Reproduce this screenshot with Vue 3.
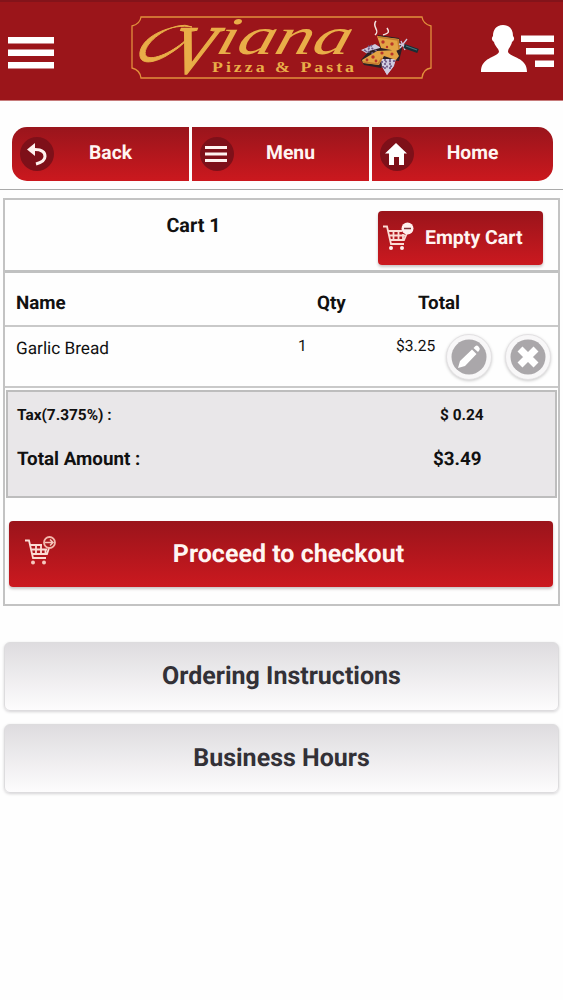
<template>
    <div class="page">
        <header class="top-bar">
            <button type="button" class="plain-btn" title="Open menu">
                <svg class="burger" width="46" height="32" viewBox="0 0 46 32">
                    <path d="M0 0h46v6.500H0zM0 12.500h46v6.500H0zM0 25h46v6.500H0z" fill="#fff" />
                </svg>
            </button>

            <svg class="logo" width="304" height="66" viewBox="0 0 304 66">
                <path class="logo-frame"
                    d="M11 2H292q1 7 9 9V53q-8 1-9 10H11q-1-8-9-10V11q8-2 9-9z" />
                <!-- flourish that sweeps in front of the name -->
                <path class="logo-swash"
                    d="M62 12C44 8 13 20 10 37C8 51 24 48 36 41C46 35 53 30 58 23C45 36 22 47 16 41C11 33 29 15 48 11Q55 9 62 12z" />
                <text class="logo-script logo-cap" transform="translate(38 58) skewX(-12)" font-size="68"
                    textLength="41" lengthAdjust="spacingAndGlyphs">V</text>
                <text class="logo-script" transform="translate(84 39) skewX(-16)" font-size="53"
                    textLength="134" lengthAdjust="spacingAndGlyphs">iana</text>
                <text class="logo-sub" x="82" y="57" textLength="145" lengthAdjust="spacingAndGlyphs">Pizza &amp; Pasta</text>

                <!-- pizza slices on a checked napkin -->
                <g>
                    <path d="M245 20c6-5-4-8 1-14M253 20c7-2 6-4 4-7" fill="none" stroke="#f4e5e2"
                        stroke-width="1.500" />
                    <path d="M231 35l14-6 8 5-12 7zM250 41l17-2-3 12-7 9-6-10z" fill="#cfcbe0" />
                    <path d="M231 45l3 5 17 3 3-9 15 2 3-12-3-11-21-3 2 13-11 3z" fill="#2b2025" />
                    <path d="M251 44h15l-3 8-6 8-5-9z" fill="#cfcbe0" />
                    <path d="M234 35l13 5M238 31l12 7M242 30l-6 7M251 47l14-1M252 52l12-1M255 44v12M260 44v12"
                        stroke="#75618c" stroke-width="1.800" stroke-dasharray="2 2" />
                    <path d="M247 21l22 3 1 10-4 2-15-3zM232 45l15-9 19-1 3 6-3 4-12-4-5 9-16-2z"
                        fill="#e3a344" />
                    <path d="M233 47l15 2 4-6M248 22l20 3 1 9" fill="none" stroke="#c57b2d"
                        stroke-width="1.500" />
                    <g fill="#b83529">
                        <circle cx="253" cy="27" r="1.700" />
                        <circle cx="262" cy="29" r="1.700" />
                        <circle cx="257" cy="32" r="1.200" />
                        <circle cx="243" cy="42" r="1.700" />
                        <circle cx="252" cy="38" r="1.600" />
                        <circle cx="262" cy="39" r="1.600" />
                        <circle cx="246" cy="46" r="1.400" />
                        <circle cx="237" cy="45" r="1.400" />
                    </g>
                    <path d="M270 33l7-9M271 26l4 9M269 29l8 2" stroke="#cfc5da" stroke-width="1.300" />
                    <path d="M274 31l14 5" stroke="#172e35" stroke-width="4.500" />
                    <path d="M276 31l11 4" stroke="#4d7077" stroke-width="1.300" />
                </g>
            </svg>

            <button type="button" class="plain-btn" title="Account">
                <svg class="account" width="73" height="47" viewBox="0 0 73 47">
                    <path
                        d="M22 0c7 0 10 5 10 11 2 2 1 5-1 6-1 5-4 6-4 10 3 6 19 5 19 20H0C0 32 15 33 18 27c0-4-4-5-5-10-2-1-3-4-1-6C12 5 15 0 22 0zM40 10.500h33v6.500H40zM45 23h28v6.500H45zM54 35.500h19v6.500H54z"
                        fill="#fff" />
                </svg>
            </button>
        </header>

        <nav class="main-nav">
            <a v-for="item in navItems" :key="item.label" class="nav-item">
                <svg class="nav-icon" width="34" height="34" viewBox="0 0 34 34">
                    <circle cx="17" cy="17" r="17" fill="#7e1019" />
                    <path v-if="item.icon === 'back'" d="M11 12.500h4q10 0 10 7 0 5-9 7.500" fill="none"
                        stroke="#fff2ef" stroke-width="3" />
                    <path v-if="item.icon === 'back'" d="M7 12.500l8-6.500v13z" fill="#fff2ef" />
                    <path v-if="item.icon === 'menu'" d="M5 10.500h22M5 17h22M5 23.500h22" stroke="#fff2ef"
                        stroke-width="3" />
                    <path v-if="item.icon === 'home'" d="M16 6l11 10.500h-3V28h-5v-8h-5v8H9V16.500H5z"
                        fill="#fff" />
                </svg>
                <span>{{ item.label }}</span>
            </a>
        </nav>

        <main class="cart">
            <div class="cart-head">
                <h2>Cart 1</h2>
                <button type="button" class="red-btn empty-btn">
                    <svg width="31" height="29" viewBox="0 0 31 29">
                        <path class="cart-line"
                            d="M0 4.500h4L8 22h13M5 9h14M6 13.500h16M7 18h14l3-7M10.500 9v9M15.500 9v9M20 12v6" />
                        <circle cx="8" cy="26" r="2" fill="#fff0ed" />
                        <circle cx="19" cy="26" r="2" fill="#fff0ed" />
                        <circle cx="24.500" cy="6.500" r="6" fill="#fff0ed" />
                        <path d="M21 6.500h7" stroke="#7c3036" stroke-width="1.500" />
                    </svg>
                    <span>Empty Cart</span>
                </button>
            </div>

            <div class="cart-row titles">
                <span>Name</span>
                <span class="qty">Qty</span>
                <span class="total">Total</span>
            </div>

            <div v-for="item in items" :key="item.name" class="cart-row item">
                <span class="item-name">{{ item.name }}</span>
                <span class="qty">{{ item.qty }}</span>
                <span class="price">{{ item.price }}</span>
                <div class="actions">
                    <button type="button" class="round-btn" title="Edit">
                        <svg width="36" height="36" viewBox="0 0 36 36">
                            <circle cx="18" cy="18" r="17.500" fill="#aaa7aa" />
                            <path d="M7 29l2-7L21 10.500l4.500 4.500L14 27zM22.500 9l2-2q1.500-1 3 .5 2 2 1 3.500l-1.500 2z"
                                fill="#fff" />
                        </svg>
                    </button>
                    <button type="button" class="round-btn" title="Remove">
                        <svg width="36" height="36" viewBox="0 0 36 36">
                            <circle cx="18" cy="18" r="17.500" fill="#aaa7aa" />
                            <path d="M10 10l16 16M26 10L10 26" stroke="#fff" stroke-width="7" />
                        </svg>
                    </button>
                </div>
            </div>

            <div class="summary">
                <div class="sum-row tax">
                    <span>Tax(7.375%) :</span>
                    <span>$ 0.24</span>
                </div>
                <div class="sum-row grand">
                    <span>Total Amount :</span>
                    <span>$3.49</span>
                </div>
            </div>

            <button type="button" class="red-btn checkout-btn">
                <svg width="31" height="29" viewBox="0 0 31 29">
                    <path class="cart-line"
                        d="M0 4.500h4L8 22h13M5 9h12M6 13.500h16M7 18h15l2-6M11 9v10M16 9v10M20.500 13v6" />
                    <circle cx="8" cy="26.500" r="2" fill="#f6c8be" />
                    <circle cx="19" cy="26.500" r="2" fill="#f6c8be" />
                    <circle cx="24.500" cy="6.500" r="5.500" fill="#a9191c" stroke="#f3b9ad" stroke-width="1.800" />
                    <path d="M20 6.500h8M25 3.500l3 3-3 3" fill="none" stroke="#f6c8be" stroke-width="1.500" />
                </svg>
                <span>Proceed to checkout</span>
            </button>
        </main>

        <button v-for="label in infoButtons" :key="label" type="button" class="info-btn">{{ label }}</button>
    </div>
</template>

<script setup>
import { ref } from 'vue'

const navItems = [
    { label: 'Back', icon: 'back' },
    { label: 'Menu', icon: 'menu' },
    { label: 'Home', icon: 'home' }
]

const items = ref([
    { name: 'Garlic Bread', qty: 1, price: '$3.25' }
])

const infoButtons = ['Ordering Instructions', 'Business Hours']
</script>

<style>
body {
    background: #fefefe;
}
</style>

<style scoped>
.page {
    box-sizing: border-box;
    width: 563px;
    min-height: 1000px;
    font-family: Roboto, "Liberation Sans", sans-serif;
    color: #111;
    text-rendering: geometricPrecision;
}

.page * {
    box-sizing: border-box;
}

button {
    font: inherit;
    border: none;
    padding: 0;
    text-rendering: inherit;
}

svg {
    display: block;
    flex: none;
}

.top-bar {
    display: flex;
    align-items: flex-start;
    height: 101px;
    background: #9b151a;
    border-top: 2px solid #83131a;
    border-bottom: 1px solid #c77b7b;
    padding-left: 8px;
}

.plain-btn {
    background: none;
}

.burger {
    margin-top: 35px;
}

.logo {
    margin: 13px 0 0 76px;
    overflow: visible;
}

.logo-frame {
    fill: none;
    stroke: #e2903c;
    stroke-width: 1.3;
}

.logo-swash {
    fill: #e9ae48;
    stroke: #e9ae48;
    stroke-width: 1;
}

.logo-script {
    font-family: "Liberation Serif", serif;
    font-style: italic;
    fill: #e9ae48;
}

.logo-cap {
    stroke: #e9ae48;
    stroke-width: 1.2;
}

.logo-sub {
    font-family: "Liberation Serif", serif;
    font-size: 15px;
    font-weight: bold;
    letter-spacing: 2.5px;
    fill: #e9ae48;
}

.account {
    margin: 23px 0 0 47px;
}

.main-nav {
    display: grid;
    grid-template-columns: 177px 177px 181px;
    gap: 3px;
    height: 54px;
    margin: 26px 10px 0 12px;
    border-radius: 15px;
    overflow: hidden;
}

.nav-item {
    display: flex;
    align-items: center;
    padding-left: 8px;
    background: linear-gradient(#99151c, #cb181e);
    color: #fff5f2;
    font-size: 19.3px;
    font-weight: 700;
}

.nav-item span {
    flex: 1;
    text-align: center;
    padding: 0 22px 3px 0;
}

.cart {
    height: 408px;
    margin: 17px 3px 0;
    border: 2px solid #c3c3c3;
    position: relative;
}

/* rule between the navigation and the cart */
.cart::before {
    content: "";
    position: absolute;
    top: -11px;
    left: -5px;
    width: 563px;
    height: 1px;
    background: #aaa;
}

.cart-head {
    display: flex;
    height: 73px;
    border-bottom: 3px solid #c0c1c1;
}

.cart-head h2 {
    width: 373px;
    padding-left: 4px;
    margin: 14px 0 0;
    font-size: 19.8px;
    line-height: 24px;
    text-align: center;
}

.red-btn {
    display: flex;
    align-items: center;
    background: linear-gradient(#9a141b, #cb191f);
    border-radius: 4px;
    color: #fff5f2;
    font-weight: 700;
    box-shadow: 0 2px 3px #c9c4c4;
}

.cart-line {
    fill: none;
    stroke: #fbdcd4;
    stroke-width: 1.8;
}

.empty-btn {
    width: 165px;
    height: 54px;
    margin-top: 11px;
    padding: 0 0 2px 5px;
    font-size: 19.5px;
}

.empty-btn svg {
    margin: 0 11px 2px 0;
}

.cart-row {
    display: grid;
    grid-template-columns: 270px 102px 1fr;
    padding-left: 11px;
}

.titles {
    height: 54px;
    align-items: center;
    border-bottom: 2px solid #c9c9c9;
    font-size: 18.8px;
    font-weight: 700;
    padding-top: 7px;
}

.titles .qty {
    padding-left: 31px;
}

.titles .total {
    padding-left: 30px;
}

.item {
    grid-template-columns: 282px 98px 50px 1fr;
    height: 61px;
    border-bottom: 2px solid #c9c9c9;
    font-size: 15.6px;
    line-height: 20px;
    padding-top: 9px;
}

.item-name {
    font-size: 17.2px;
    padding-top: 3px;
}

.actions {
    display: flex;
    gap: 13px;
    margin-top: -2px;
}

.round-btn {
    display: flex;
    align-items: center;
    justify-content: center;
    width: 46px;
    height: 46px;
    border-radius: 50%;
    border: 1px solid #e3e1e3;
    background: #f8f7f8;
    box-shadow: 0 1px 3px #ccc;
}

.summary {
    height: 108px;
    margin: 2px 1px 0;
    border: 2px solid #bdbdbd;
    background: #e9e7e9;
    padding: 12px 0 0 9px;
}

.sum-row {
    display: flex;
    align-items: center;
}

.tax {
    font-size: 15.4px;
    font-weight: 700;
    height: 22px;
}

.grand {
    font-size: 18.8px;
    font-weight: 700;
    height: 26px;
    margin-top: 20px;
}

.tax span:first-child {
    width: 423px;
}

.grand span:first-child {
    width: 416px;
}

.checkout-btn {
    width: 544px;
    height: 66px;
    margin: 23px 0 0 4px;
    padding: 0 0 0 16px;
    font-size: 25px;
}

.checkout-btn svg {
    margin-bottom: 7px;
}

.checkout-btn span {
    flex: 1;
    text-align: center;
    padding-right: 32px;
}

.info-btn {
    display: block;
    width: 555px;
    height: 69px;
    margin: 13px 0 0 4px;
    border: 1px solid #dddcde;
    border-radius: 6px;
    background: linear-gradient(#dedcdf, #fdfcfd);
    box-shadow: 0 1px 3px #d4d3d5;
    font-size: 25px;
    font-weight: 700;
    color: #333137;
}

.cart + .info-btn {
    margin-top: 36px;
    padding-bottom: 1px;
}
</style>
